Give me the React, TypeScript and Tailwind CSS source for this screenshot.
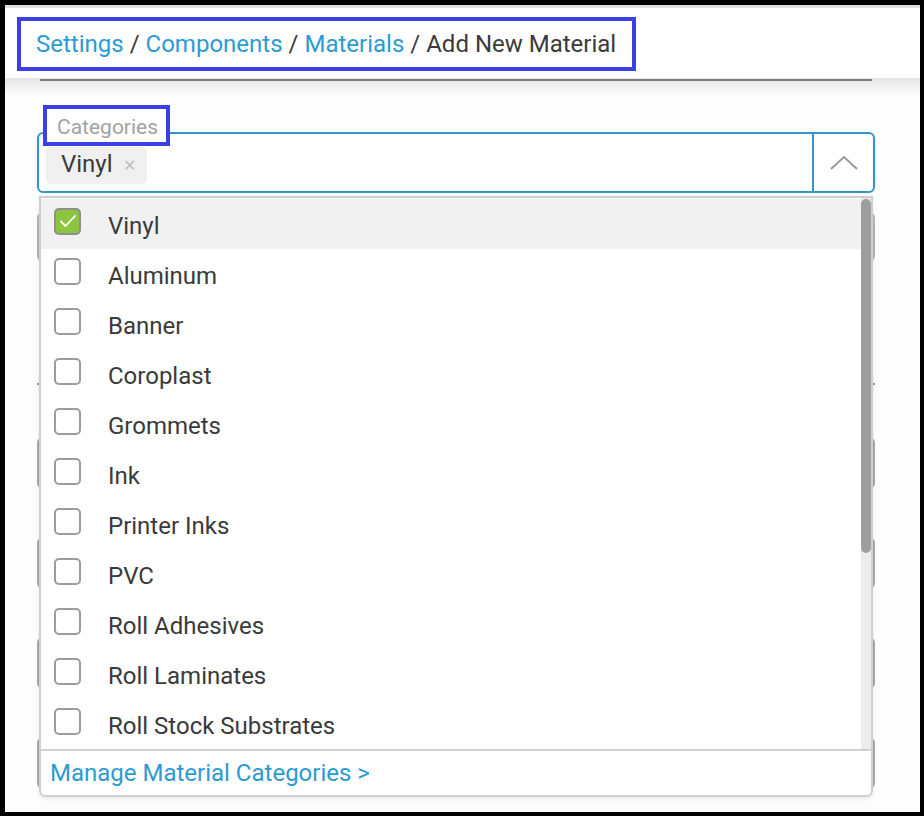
import React from "react";

const CATEGORIES = [
  "Vinyl",
  "Aluminum",
  "Banner",
  "Coroplast",
  "Grommets",
  "Ink",
  "Printer Inks",
  "PVC",
  "Roll Adhesives",
  "Roll Laminates",
  "Roll Stock Substrates",
];

const font = { fontFamily: "Roboto, 'Liberation Sans', sans-serif" };

function Checkbox({ checked }: { checked: boolean }) {
  if (checked) {
    return (
      <span className="relative -top-[3px] w-[27px] h-[27px] rounded-[5px] border-2 border-[#8f8f8f] bg-[#8cc63f] flex items-center justify-center shrink-0">
        <svg width="18" height="14" viewBox="0 0 18 14" fill="none">
          <path d="M2 7.5 L6.5 12 L16 2" stroke="#fff" strokeWidth="1.8" strokeLinecap="round" strokeLinejoin="round" />
        </svg>
      </span>
    );
  }
  return <span className="relative -top-[3px] block w-[27px] h-[27px] rounded-[5px] border-2 border-[#9c9c9c] bg-white shrink-0" />;
}

export default function App() {
  const selected = ["Vinyl"];

  return (
    <div className="w-[924px] h-[816px] bg-black pl-[5px] pr-[4px] pt-[5px] pb-[4px]" style={font}>
      <div className="h-full bg-[#fdfdfd] overflow-hidden flex flex-col">
        {/* header */}
        <div className="border-t-[3px] border-[#e2e2e2] bg-white h-[73px] pl-[12px] pt-[9px]">
          <div className="inline-flex items-center h-[54px] border-[4px] border-[#3b3fe4] pl-[15px] pr-[16px] text-[24px] text-[#3a3a3a]">
            <span className="text-[#2b9bd4]">Settings</span>
            <span className="px-[6px]">/</span>
            <span className="text-[#2b9bd4]">Components</span>
            <span className="px-[6px]">/</span>
            <span className="text-[#2b9bd4]">Materials</span>
            <span className="px-[6px]">/</span>
            <span>Add New Material</span>
          </div>
        </div>
        <div className="h-[17px] bg-gradient-to-b from-[#e4e4e4] to-[#fdfdfd]">
          <div className="ml-[35px] mr-[48px] mt-[1px] h-[2px] bg-[#7c7c7c]" />
        </div>

        {/* form */}
        <div className="pl-[32px] pr-[45px] pt-[37px]">
          <div className="relative w-[838px]">
            <div className="relative h-[61px] border-2 border-[#3394c7] rounded-[6px] bg-white flex">
              <div className="absolute left-[4px] -top-[29px] h-[41px] border-[4px] border-[#3b3fe4] bg-white pl-[10px] pr-[8px] pt-[4px] flex items-center text-[21px] text-[#a2a2a2]">
                Categories
              </div>
              <div className="flex-1 flex items-end pl-[7px] pb-[7px]">
                {selected.map((s) => (
                  <span key={s} className="h-[37px] rounded-[5px] bg-[#f0f0f0] pl-[15px] pr-[11px] flex items-center gap-[10px] text-[24px] text-[#3a3a3a]">
                    <span className="-mt-[3px]">{s}</span>
                    <span className="text-[16px] text-[#bdbdbd]">✕</span>
                  </span>
                ))}
              </div>
              <div className="w-[61px] border-l-2 border-[#3394c7] flex items-center justify-center">
                <svg width="30" height="16" viewBox="0 0 30 16" fill="none">
                  <path d="M2 14 L15 2 L28 14" stroke="#9a9a9a" strokeWidth="2" />
                </svg>
              </div>
            </div>

            {/* fields behind the open dropdown */}
            <div className="mt-[19px] h-[50px] border-2 border-[#b5b5b5] rounded-[6px] bg-white" />
            <div className="mt-[121px] h-[2px] bg-[#9a9a9a]" />
            <div className="mt-[52px] h-[52px] border-2 border-[#a8a8a8] rounded-[6px] bg-white" />
            <div className="mt-[48px] h-[52px] border-2 border-[#a8a8a8] rounded-[6px] bg-white" />
            <div className="mt-[48px] h-[52px] border-2 border-[#a8a8a8] rounded-[6px] bg-white" />
            <div className="mt-[48px] h-[52px] border-2 border-[#a8a8a8] rounded-[6px] bg-white" />

            {/* dropdown */}
            <div className="absolute left-[2px] top-[64px] w-[834px] h-[601px] border-2 border-[#cfcfcf] rounded-b-[6px] bg-white flex flex-col shadow-[0_2px_4px_rgba(0,0,0,0.08)]">
              <div className="relative h-[551px] overflow-hidden">
                <div className="pt-[1px]">
                  {CATEGORIES.map((c) => {
                    const on = selected.includes(c);
                    return (
                      <div key={c} className={`h-[50px] flex items-center pl-[13px] gap-[27px] text-[24px] text-[#3a3a3a] ${on ? "bg-[#f1f1f1]" : ""}`}>
                        <Checkbox checked={on} />
                        <span className="relative top-[2px]">{c}</span>
                      </div>
                    );
                  })}
                </div>
                <div className="absolute right-0 top-0 bottom-0 w-[10px] bg-[#ececec]">
                  <div className="mt-[1px] h-[354px] rounded-full bg-[#9e9e9e]" />
                </div>
              </div>
              <div className="flex-1 border-t-2 border-[#d0d0d0] flex items-center pl-[9px] text-[24px] text-[#2b9bd4]">
                Manage Material Categories &gt;
              </div>
            </div>
          </div>
        </div>
      </div>
    </div>
  );
}
